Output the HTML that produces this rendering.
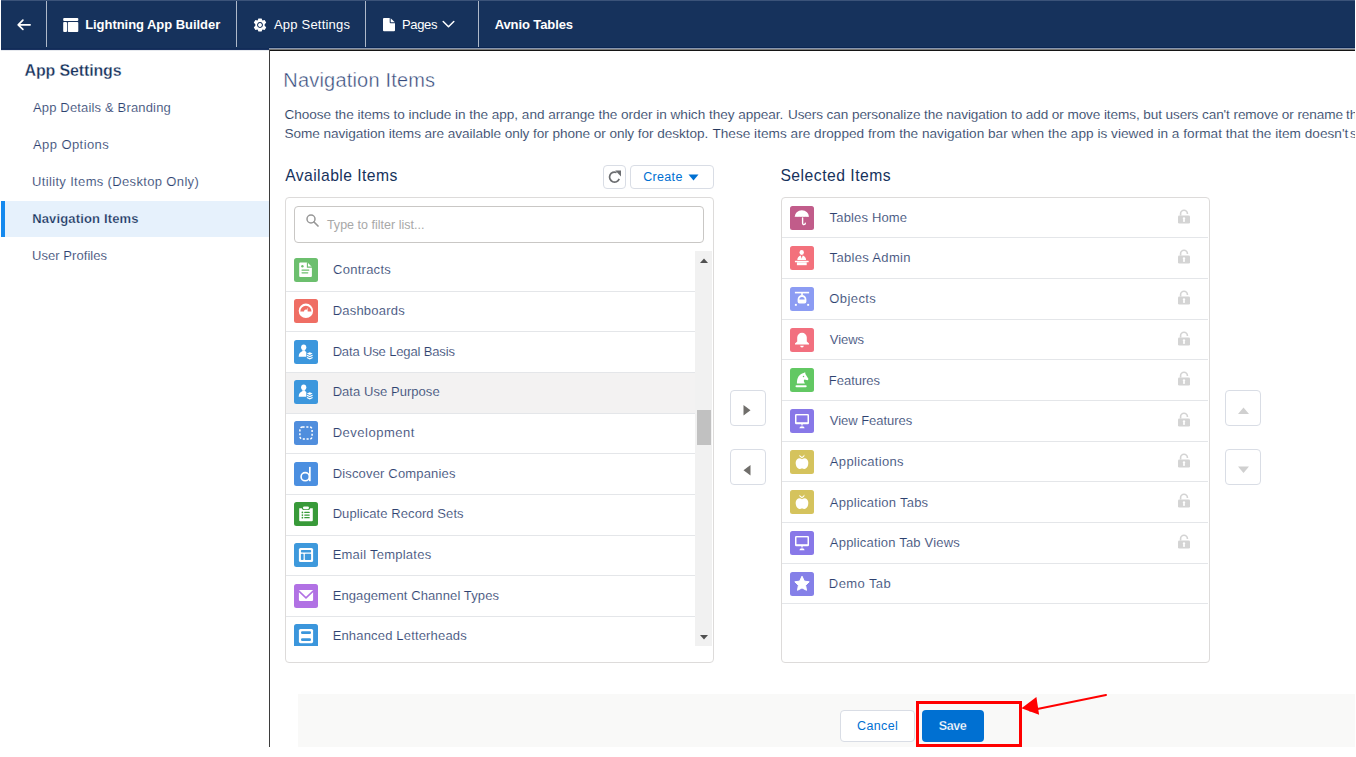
<!DOCTYPE html>
<html><head><meta charset="utf-8"><style>
html,body{margin:0;padding:0;background:#fff;width:1356px;height:757px;overflow:hidden;position:relative;}
.t{position:absolute;white-space:nowrap;font-family:"Liberation Sans", sans-serif;line-height:normal;}
svg{display:block;}
</style></head><body>
<div style="position:absolute;left:1px;top:0px;width:1354px;height:48px;background:#16325c;"></div><div style="position:absolute;left:1px;top:0px;width:1354px;height:1px;background:#3b5379;"></div><div style="position:absolute;left:1px;top:48px;width:268px;height:1px;background:#112c58;"></div><div style="position:absolute;left:1px;top:49px;width:268px;height:1px;background:#1a3260;"></div><div style="position:absolute;left:1px;top:50px;width:268px;height:1px;background:#e6e9ee;"></div><div style="position:absolute;left:269px;top:47px;width:1086px;height:1px;background:#0a2654;"></div><div style="position:absolute;left:269px;top:48px;width:1086px;height:1px;background:#8996ad;"></div><div style="position:absolute;left:46px;top:1px;width:1px;height:46px;background:#c9d1dd;opacity:.85;"></div><div style="position:absolute;left:236px;top:1px;width:1px;height:46px;background:#c9d1dd;opacity:.85;"></div><div style="position:absolute;left:365px;top:1px;width:1px;height:46px;background:#c9d1dd;opacity:.85;"></div><div style="position:absolute;left:478px;top:1px;width:1px;height:46px;background:#c9d1dd;opacity:.85;"></div><svg style="position:absolute;left:16px;top:18px" width="16" height="14" viewBox="0 0 16 14"><path d="M14.1 6.8H2.4M6.9 2.2L2.2 6.8l4.7 4.6" fill="none" stroke="#fff" stroke-width="1.7" stroke-linecap="round" stroke-linejoin="round"/></svg><svg style="position:absolute;left:63px;top:18px" width="16" height="14" viewBox="0 0 16 14"><rect x="0.2" y="0" width="15.1" height="3" rx="1" fill="#fff"/><rect x="0.2" y="3.9" width="3.8" height="10" rx=".9" fill="#fff"/><rect x="4.8" y="3.9" width="10.5" height="10" rx=".9" fill="#fff"/></svg><div class="t" style="left:85.13px;top:17px;font-size:13px;color:#fff;font-weight:700;letter-spacing:-0.044px;">Lightning App Builder</div><svg style="position:absolute;left:253px;top:18px" width="14" height="14" viewBox="-7 -7 14 14"><path fill="#fff" fill-rule="evenodd" d="M-1.6,-6.6 L1.6,-6.6 L2.4,-4.6 L4.6,-5.1 L6.2,-2.4 L4.6,-0.6 L4.6,0.6 L6.2,2.4 L4.6,5.1 L2.4,4.6 L1.6,6.6 L-1.6,6.6 L-2.4,4.6 L-4.6,5.1 L-6.2,2.4 L-4.6,0.6 L-4.6,-0.6 L-6.2,-2.4 L-4.6,-5.1 L-2.4,-4.6 Z M0,-2.9 A2.9,2.9 0 1 0 0.001,-2.9 Z M0,-1.9 A1.9,1.9 0 1 1 -0.001,-1.9 Z"/></svg><div class="t" style="left:273.97px;top:17px;font-size:13px;color:#fff;font-weight:400;letter-spacing:0.206px;">App Settings</div><svg style="position:absolute;left:383px;top:18px" width="12" height="14" viewBox="0 0 12 14"><path d="M1 0H6.7V4.3a1 1 0 0 0 1 1H12V12.3a1 1 0 0 1-1 1H1a1 1 0 0 1-1-1V1a1 1 0 0 1 1-1z" fill="#fff"/><path d="M7.7 0.2L11.8 4.3H7.7z" fill="#fff"/></svg><div class="t" style="left:401.93px;top:17px;font-size:13px;color:#fff;font-weight:400;letter-spacing:-0.335px;">Pages</div><svg style="position:absolute;left:442px;top:20px" width="13" height="9" viewBox="0 0 13 9"><path d="M1.2 1.5l5.3 5.3 5.3-5.3" fill="none" stroke="#fff" stroke-width="1.5" stroke-linecap="round" stroke-linejoin="round"/></svg><div class="t" style="left:494.68px;top:17px;font-size:13px;color:#fff;font-weight:700;letter-spacing:-0.100px;">Avnio Tables</div><div class="t" style="left:24.60px;top:62px;font-size:16px;color:#16325c;font-weight:700;letter-spacing:-0.153px;-webkit-text-stroke:0.3px #fff;">App Settings</div><div style="position:absolute;left:1px;top:201px;width:268px;height:36px;background:#e6f1fc;"></div><div style="position:absolute;left:1px;top:201px;width:4px;height:36px;background:#1589ee;"></div><div class="t" style="left:32.97px;top:100px;font-size:13px;color:#2e4270;font-weight:400;letter-spacing:0.162px;-webkit-text-stroke:0.15px #fff;">App Details &amp; Branding</div><div class="t" style="left:32.97px;top:137px;font-size:13px;color:#2e4270;font-weight:400;letter-spacing:0.423px;-webkit-text-stroke:0.15px #fff;">App Options</div><div class="t" style="left:32.00px;top:174px;font-size:13px;color:#2e4270;font-weight:400;letter-spacing:0.345px;-webkit-text-stroke:0.15px #fff;">Utility Items (Desktop Only)</div><div class="t" style="left:32.13px;top:211px;font-size:13px;color:#16325c;font-weight:700;letter-spacing:0.158px;-webkit-text-stroke:0.25px #e6f1fc;">Navigation Items</div><div class="t" style="left:32.00px;top:248px;font-size:13px;color:#2e4270;font-weight:400;letter-spacing:0.054px;-webkit-text-stroke:0.15px #fff;">User Profiles</div><div style="position:absolute;left:269px;top:49px;width:1087px;height:1px;background:#777674;"></div><div style="position:absolute;left:269px;top:50px;width:1087px;height:1px;background:#141414;"></div><div style="position:absolute;left:269px;top:50px;width:1px;height:697px;background:#3d3d3d;"></div><div class="t" style="left:283.36px;top:69px;font-size:20px;color:#34497a;font-weight:400;letter-spacing:0.186px;-webkit-text-stroke:0.4px #fff;">Navigation Items</div><div class="t" style="left:284.51px;top:107px;font-size:13.6px;color:#26395e;font-weight:400;letter-spacing:-0.036px;-webkit-text-stroke:0.15px #fff;">Choose the items to include in the app, and arrange the order in which they appear.</div><div class="t" style="left:787.95px;top:107px;font-size:13.6px;color:#26395e;font-weight:400;letter-spacing:-0.099px;-webkit-text-stroke:0.15px #fff;">Users can personalize the navigation to add or move items, but users can&#39;t remove or rename</div><div class="t" style="left:1346.09px;top:107px;font-size:13.6px;color:#26395e;font-weight:400;-webkit-text-stroke:0.15px #fff;">them.</div><div class="t" style="left:284.58px;top:126px;font-size:13.6px;color:#26395e;font-weight:400;letter-spacing:-0.058px;-webkit-text-stroke:0.15px #fff;">Some navigation items are available only for phone or only for desktop.</div><div class="t" style="left:712.39px;top:126px;font-size:13.6px;color:#26395e;font-weight:400;letter-spacing:0.031px;-webkit-text-stroke:0.15px #fff;">These items are dropped from the navigation bar when the app is viewed in a format that the item doesn&#39;t</div><div class="t" style="left:1350.02px;top:126px;font-size:13.6px;color:#26395e;font-weight:400;-webkit-text-stroke:0.15px #fff;">support.</div><div class="t" style="left:285.17px;top:167px;font-size:15.7px;color:#16325c;font-weight:400;letter-spacing:0.431px;">Available Items</div><div class="t" style="left:780.39px;top:167px;font-size:15.7px;color:#16325c;font-weight:400;letter-spacing:0.504px;">Selected Items</div><div style="position:absolute;left:603px;top:165px;width:23px;height:24px;border:1px solid #d9dde5;border-radius:4px;box-sizing:border-box;background:#fff;"></div><svg style="position:absolute;left:607px;top:170px" width="15" height="14" viewBox="0 0 15 14"><path d="M12.2 8.9A5 5 0 1 1 9.6 2.5" fill="none" stroke="#6b6d70" stroke-width="1.7"/><path d="M8.2 0.6L14 0.6L14 6.4Z" fill="#6b6d70"/></svg><div style="position:absolute;left:630px;top:165px;width:84px;height:24px;border:1px solid #d9dde5;border-radius:4px;box-sizing:border-box;background:#fff;"></div><div class="t" style="left:643.27px;top:170px;font-size:12.5px;color:#0070d2;font-weight:400;letter-spacing:0.315px;">Create</div><svg style="position:absolute;left:688px;top:174px" width="11" height="7" viewBox="0 0 11 7"><path d="M0.5 0.5H10.5L5.5 6.5Z" fill="#0070d2"/></svg><div style="position:absolute;left:285px;top:197px;width:429px;height:466px;border:1px solid #dddbda;border-radius:4px;box-sizing:border-box;background:#fff;"></div><div style="position:absolute;left:294px;top:206px;width:410px;height:37px;border:1px solid #c9c7c5;border-radius:4px;box-sizing:border-box;background:#fff;"></div><svg style="position:absolute;left:306px;top:214px" width="13" height="13" viewBox="0 0 13 13"><circle cx="5" cy="5" r="4" fill="none" stroke="#979797" stroke-width="1.5"/><path d="M8 8l4 4" stroke="#979797" stroke-width="1.7" stroke-linecap="round"/></svg><div class="t" style="left:326.92px;top:218px;font-size:12.5px;color:#a8a8a8;font-weight:400;letter-spacing:0.018px;">Type to filter list...</div><div style="position:absolute;left:286px;top:251px;width:427px;height:395px;overflow:hidden;"><div style="position:absolute;left:0;top:39.60px;width:409px;height:1px;background:#e4e6e9;"></div><svg style="position:absolute;left:8px;top:7.30px" width="24" height="24" viewBox="0 0 24 24"><rect width="24" height="24" rx="2.5" fill="#6cbf6e"/><path d="M6.2 4.6h7.4l4.3 4.3V18a1 1 0 0 1-1 1H6.2a1 1 0 0 1-1-1V5.6a1 1 0 0 1 1-1z" fill="#fff"/><path d="M13.4 4.2V9.1H18.3" fill="none" stroke="#6cbf6e" stroke-width="1.1"/><circle cx="8.4" cy="8.3" r="1.2" fill="#6cbf6e"/><rect x="7.4" y="11.4" width="8" height="1.3" rx=".65" fill="#6cbf6e"/><rect x="7.4" y="14.2" width="7" height="1.3" rx=".65" fill="#6cbf6e"/></svg><div class="t" style="left:47.04px;top:11.300000000000011px;font-size:13px;color:#2e4270;font-weight:400;letter-spacing:0.261px;-webkit-text-stroke:0.15px #fff;">Contracts</div><div style="position:absolute;left:0;top:80.28px;width:409px;height:1px;background:#e4e6e9;"></div><svg style="position:absolute;left:8px;top:47.98px" width="24" height="24" viewBox="0 0 24 24"><rect width="24" height="24" rx="2.5" fill="#ef6e64"/><circle cx="11.9" cy="11.8" r="7.2" fill="#fff"/><path d="M6.3 12.4A5.6 5.6 0 0 1 17.5 12.4H13.8A1.9 1.9 0 0 0 10 12.4Z" fill="#ef6e64"/><path d="M11.2 12.9L14.2 8.3L12.7 13.6Z" fill="#fff"/></svg><div class="t" style="left:46.63px;top:51.97500000000002px;font-size:13px;color:#2e4270;font-weight:400;letter-spacing:0.223px;-webkit-text-stroke:0.15px #fff;">Dashboards</div><div style="position:absolute;left:0;top:120.95px;width:409px;height:1px;background:#e4e6e9;"></div><svg style="position:absolute;left:8px;top:88.65px" width="24" height="24" viewBox="0 0 24 24"><rect width="24" height="24" rx="2.5" fill="#3c97dd"/><ellipse cx="9.7" cy="7.3" rx="2.6" ry="2.9" fill="#fff"/><path d="M4.7 16.7C4.7 13.4 6.4 11.8 8.3 11.2V10.3H11.1V11.2C11.6 11.4 12 11.6 12.3 11.9V16.7Z" fill="#fff"/><path d="M15.75 12.2l2.9 1.35-2.9 1.35-2.9-1.35z" fill="#fff"/><path d="M12.9 15.3l2.85 1.3 2.85-1.3" stroke="#fff" stroke-width="1.1" fill="none"/><path d="M12.9 17.5l2.85 1.3 2.85-1.3" stroke="#fff" stroke-width="1.1" fill="none"/></svg><div class="t" style="left:46.63px;top:92.64999999999998px;font-size:13px;color:#2e4270;font-weight:400;letter-spacing:-0.143px;-webkit-text-stroke:0.15px #fff;">Data Use Legal Basis</div><div style="position:absolute;left:0;top:122.35px;width:409px;height:39.67px;background:#f3f2f2;"></div><div style="position:absolute;left:0;top:161.62px;width:409px;height:1px;background:#e4e6e9;"></div><svg style="position:absolute;left:8px;top:129.32px" width="24" height="24" viewBox="0 0 24 24"><rect width="24" height="24" rx="2.5" fill="#3c97dd"/><ellipse cx="9.7" cy="7.3" rx="2.6" ry="2.9" fill="#fff"/><path d="M4.7 16.7C4.7 13.4 6.4 11.8 8.3 11.2V10.3H11.1V11.2C11.6 11.4 12 11.6 12.3 11.9V16.7Z" fill="#fff"/><path d="M15.75 12.2l2.9 1.35-2.9 1.35-2.9-1.35z" fill="#fff"/><path d="M12.9 15.3l2.85 1.3 2.85-1.3" stroke="#fff" stroke-width="1.1" fill="none"/><path d="M12.9 17.5l2.85 1.3 2.85-1.3" stroke="#fff" stroke-width="1.1" fill="none"/></svg><div class="t" style="left:46.63px;top:133.325px;font-size:13px;color:#2e4270;font-weight:400;letter-spacing:0.053px;-webkit-text-stroke:0.15px #f3f2f2;">Data Use Purpose</div><div style="position:absolute;left:0;top:202.30px;width:409px;height:1px;background:#e4e6e9;"></div><svg style="position:absolute;left:8px;top:170.00px" width="24" height="24" viewBox="0 0 24 24"><rect width="24" height="24" rx="2.5" fill="#508edd"/><rect x="5.9" y="5.9" width="12.2" height="12.2" rx="2.6" fill="none" stroke="#fff" stroke-width="1.5" stroke-dasharray="2.1 1.7"/></svg><div class="t" style="left:46.63px;top:174.0px;font-size:13px;color:#2e4270;font-weight:400;letter-spacing:0.514px;-webkit-text-stroke:0.15px #fff;">Development</div><div style="position:absolute;left:0;top:242.98px;width:409px;height:1px;background:#e4e6e9;"></div><svg style="position:absolute;left:8px;top:210.68px" width="24" height="24" viewBox="0 0 24 24"><rect width="24" height="24" rx="2.5" fill="#4b8fe0"/><ellipse cx="11.2" cy="14.7" rx="4.1" ry="4.1" fill="none" stroke="#fff" stroke-width="1.6"/><rect x="15" y="4.9" width="1.7" height="14.3" fill="#fff"/></svg><div class="t" style="left:46.63px;top:214.675px;font-size:13px;color:#2e4270;font-weight:400;letter-spacing:0.169px;-webkit-text-stroke:0.15px #fff;">Discover Companies</div><div style="position:absolute;left:0;top:283.65px;width:409px;height:1px;background:#e4e6e9;"></div><svg style="position:absolute;left:8px;top:251.35px" width="24" height="24" viewBox="0 0 24 24"><rect width="24" height="24" rx="2.5" fill="#389a39"/><path d="M5.2 6.3h2.6a1.9 1.9 0 0 0 1.9 1.6h4.6a1.9 1.9 0 0 0 1.9-1.6h2.6V18.2a1 1 0 0 1-1 1H6.2a1 1 0 0 1-1-1z" fill="#fff"/><rect x="8.9" y="4.4" width="6.1" height="2.8" rx="1.4" fill="#fff"/><circle cx="8.4" cy="10.4" r=".85" fill="#389a39"/><circle cx="8.4" cy="13.1" r=".85" fill="#389a39"/><circle cx="8.4" cy="15.7" r=".85" fill="#389a39"/><rect x="10.2" y="9.8" width="5.6" height="1.2" rx=".6" fill="#389a39"/><rect x="10.2" y="12.5" width="5.6" height="1.2" rx=".6" fill="#389a39"/><rect x="10.2" y="15.1" width="5.6" height="1.2" rx=".6" fill="#389a39"/></svg><div class="t" style="left:46.63px;top:255.35000000000002px;font-size:13px;color:#2e4270;font-weight:400;letter-spacing:0.083px;-webkit-text-stroke:0.15px #fff;">Duplicate Record Sets</div><div style="position:absolute;left:0;top:324.33px;width:409px;height:1px;background:#e4e6e9;"></div><svg style="position:absolute;left:8px;top:292.02px" width="24" height="24" viewBox="0 0 24 24"><rect width="24" height="24" rx="2.5" fill="#3e99dc"/><rect x="4.9" y="4.9" width="14.2" height="14.2" rx="1.6" fill="#fff"/><rect x="6.9" y="6.9" width="10.2" height="2.6" rx=".8" fill="#3e99dc"/><rect x="6.9" y="10.8" width="2.7" height="6.3" rx=".8" fill="#3e99dc"/><rect x="10.8" y="10.8" width="6.3" height="6.3" rx=".8" fill="#3e99dc"/></svg><div class="t" style="left:46.63px;top:296.025px;font-size:13px;color:#2e4270;font-weight:400;letter-spacing:0.241px;-webkit-text-stroke:0.15px #fff;">Email Templates</div><div style="position:absolute;left:0;top:365.00px;width:409px;height:1px;background:#e4e6e9;"></div><svg style="position:absolute;left:8px;top:332.70px" width="24" height="24" viewBox="0 0 24 24"><rect width="24" height="24" rx="2.5" fill="#b171e4"/><path d="M4.9 5.9h14.2L12 12.8z" fill="#fff"/><path d="M4.9 8.2L12 14.9l7.1-6.7V15.8a1.2 1.2 0 0 1-1.2 1.2H6.1a1.2 1.2 0 0 1-1.2-1.2z" fill="#fff"/></svg><div class="t" style="left:46.63px;top:336.70000000000005px;font-size:13px;color:#2e4270;font-weight:400;letter-spacing:0.111px;-webkit-text-stroke:0.15px #fff;">Engagement Channel Types</div><svg style="position:absolute;left:8px;top:373.38px" width="24" height="24" viewBox="0 0 24 24"><rect width="24" height="24" rx="2.5" fill="#3b96dc"/><rect x="4.9" y="5" width="14.2" height="14.2" rx="1.6" fill="#fff"/><rect x="7" y="7.3" width="10" height="2.7" rx="1.3" fill="#3b96dc"/><rect x="7" y="14.3" width="10" height="2.7" rx="1.3" fill="#3b96dc"/></svg><div class="t" style="left:46.63px;top:377.375px;font-size:13px;color:#2e4270;font-weight:400;letter-spacing:0.172px;-webkit-text-stroke:0.15px #fff;">Enhanced Letterheads</div><div style="position:absolute;left:409px;top:0;width:17px;height:395px;background:#f1f1f1;"></div><div style="position:absolute;left:411px;top:159px;width:14px;height:35px;background:#c1c1c1;"></div><svg style="position:absolute;left:414px;top:7px" width="8" height="5" viewBox="0 0 8 5"><path d="M0 5L4 0.5L8 5Z" fill="#505050"/></svg><svg style="position:absolute;left:414px;top:384px" width="8" height="5" viewBox="0 0 8 5"><path d="M0 0L8 0L4 4.5Z" fill="#505050"/></svg></div><div style="position:absolute;left:730px;top:390px;width:36px;height:36px;border:1px solid #d9dde5;border-radius:4px;box-sizing:border-box;background:#fff;"></div><svg style="position:absolute;left:741px;top:405.4px" width="12" height="11" viewBox="0 0 12 11"><path d="M2.5 0L9.5 5.2L2.5 10.4Z" fill="#706e6b"/></svg><div style="position:absolute;left:730px;top:449px;width:36px;height:36px;border:1px solid #d9dde5;border-radius:4px;box-sizing:border-box;background:#fff;"></div><svg style="position:absolute;left:741px;top:464.8px" width="12" height="11" viewBox="0 0 12 11"><path d="M9.5 0L2.5 5.2L9.5 10.4Z" fill="#706e6b"/></svg><div style="position:absolute;left:781px;top:197px;width:429px;height:466px;border:1px solid #dddbda;border-radius:4px;box-sizing:border-box;background:#fff;"></div><div style="position:absolute;left:782px;top:237.20px;width:426px;height:1px;background:#e4e6e9;"></div><svg style="position:absolute;left:790px;top:205.60px" width="24" height="24" viewBox="0 0 24 24"><rect width="24" height="24" rx="2.5" fill="#c15c8a"/><path d="M4.6 11A7.2 6.7 0 0 1 19.1 11c-.45-.45-.95-.45-1.45 0-.45-.45-.95-.45-1.45 0-.45-.45-.95-.45-1.45 0-.45-.45-.95-.45-1.45 0-.45-.45-.95-.45-1.45 0-.45-.45-.95-.45-1.45 0-.45-.45-.95-.45-1.45 0-.45-.45-.95-.45-1.45 0-.45-.45-.95-.45-1.45 0-.45-.45-.95-.45-1.45 0z" fill="#fff"/><path d="M12.6 12v5.3a1.35 1.35 0 0 0 2.7 0" fill="none" stroke="#fff" stroke-width="1.4" stroke-linecap="round"/></svg><div class="t" style="left:829.61px;top:209.8px;font-size:13px;color:#2e4270;font-weight:400;letter-spacing:0.158px;-webkit-text-stroke:0.15px #fff;">Tables Home</div><svg style="position:absolute;left:1177px;top:208.50px" width="14" height="15" viewBox="0 0 14 15"><path d="M3.6 6.5V4.6a3.4 3.4 0 0 1 6.8 0v.5" fill="none" stroke="#d4d4d4" stroke-width="1.6"/><rect x="1" y="6.5" width="12" height="8" rx="1.2" fill="#d4d4d4"/><path d="M7 8.3a1.2 1.2 0 0 1 .7 2.2l.4 2.2H5.9l.4-2.2A1.2 1.2 0 0 1 7 8.3z" fill="#fff"/></svg><div style="position:absolute;left:782px;top:277.88px;width:426px;height:1px;background:#e4e6e9;"></div><svg style="position:absolute;left:790px;top:246.27px" width="24" height="24" viewBox="0 0 24 24"><rect width="24" height="24" rx="2.5" fill="#f3717c"/><ellipse cx="11.7" cy="6.5" rx="2.2" ry="2.4" fill="#fff"/><path d="M7.3 14C7.3 11.3 9 9.9 10.8 9.5L11.7 12.7L12.6 9.5C14.4 9.9 16.1 11.3 16.1 14Z" fill="#fff"/><rect x="4.9" y="14.8" width="13.8" height="1.5" rx=".5" fill="#fff"/><rect x="6.9" y="16.3" width="9.8" height="2.9" fill="#fff"/></svg><div class="t" style="left:829.61px;top:250.47500000000002px;font-size:13px;color:#2e4270;font-weight:400;letter-spacing:0.327px;-webkit-text-stroke:0.15px #fff;">Tables Admin</div><svg style="position:absolute;left:1177px;top:249.18px" width="14" height="15" viewBox="0 0 14 15"><path d="M3.6 6.5V4.6a3.4 3.4 0 0 1 6.8 0v.5" fill="none" stroke="#d4d4d4" stroke-width="1.6"/><rect x="1" y="6.5" width="12" height="8" rx="1.2" fill="#d4d4d4"/><path d="M7 8.3a1.2 1.2 0 0 1 .7 2.2l.4 2.2H5.9l.4-2.2A1.2 1.2 0 0 1 7 8.3z" fill="#fff"/></svg><div style="position:absolute;left:782px;top:318.55px;width:426px;height:1px;background:#e4e6e9;"></div><svg style="position:absolute;left:790px;top:286.95px" width="24" height="24" viewBox="0 0 24 24"><rect width="24" height="24" rx="2.5" fill="#8c9cf3"/><rect x="4.9" y="4.8" width="14.2" height="1.6" fill="#fff"/><rect x="11.2" y="6" width="1.6" height="2.2" fill="#fff"/><path d="M12 7.9A4.4 4.6 0 0 1 16.4 12.5V14.6A1.9 1.9 0 0 1 14.5 16.5H9.5A1.9 1.9 0 0 1 7.6 14.6V12.5A4.4 4.6 0 0 1 12 7.9Z" fill="#fff"/><path d="M9.3 12.4A2.7 2.5 0 0 1 14.7 12.4Z" fill="#8c9cf3"/><rect x="4.9" y="16.9" width="1.9" height="1.9" fill="#fff"/><rect x="17.2" y="16.9" width="1.9" height="1.9" fill="#fff"/></svg><div class="t" style="left:829.28px;top:291.15px;font-size:13px;color:#2e4270;font-weight:400;letter-spacing:0.418px;-webkit-text-stroke:0.15px #fff;">Objects</div><svg style="position:absolute;left:1177px;top:289.85px" width="14" height="15" viewBox="0 0 14 15"><path d="M3.6 6.5V4.6a3.4 3.4 0 0 1 6.8 0v.5" fill="none" stroke="#d4d4d4" stroke-width="1.6"/><rect x="1" y="6.5" width="12" height="8" rx="1.2" fill="#d4d4d4"/><path d="M7 8.3a1.2 1.2 0 0 1 .7 2.2l.4 2.2H5.9l.4-2.2A1.2 1.2 0 0 1 7 8.3z" fill="#fff"/></svg><div style="position:absolute;left:782px;top:359.22px;width:426px;height:1px;background:#e4e6e9;"></div><svg style="position:absolute;left:790px;top:327.62px" width="24" height="24" viewBox="0 0 24 24"><rect width="24" height="24" rx="2.5" fill="#f2707f"/><path d="M12 4.8A4.8 4.8 0 0 1 16.8 9.6V13.6L19 15.6V16.6H5V15.6L7.2 13.6V9.6A4.8 4.8 0 0 1 12 4.8Z" fill="#fff"/><path d="M10.2 17.8H13.8A1.8 1.6 0 0 1 10.2 17.8Z" fill="#fff"/></svg><div class="t" style="left:829.84px;top:331.825px;font-size:13px;color:#2e4270;font-weight:400;letter-spacing:-0.082px;-webkit-text-stroke:0.15px #fff;">Views</div><svg style="position:absolute;left:1177px;top:330.52px" width="14" height="15" viewBox="0 0 14 15"><path d="M3.6 6.5V4.6a3.4 3.4 0 0 1 6.8 0v.5" fill="none" stroke="#d4d4d4" stroke-width="1.6"/><rect x="1" y="6.5" width="12" height="8" rx="1.2" fill="#d4d4d4"/><path d="M7 8.3a1.2 1.2 0 0 1 .7 2.2l.4 2.2H5.9l.4-2.2A1.2 1.2 0 0 1 7 8.3z" fill="#fff"/></svg><div style="position:absolute;left:782px;top:399.90px;width:426px;height:1px;background:#e4e6e9;"></div><svg style="position:absolute;left:790px;top:368.30px" width="24" height="24" viewBox="0 0 24 24"><rect width="24" height="24" rx="2.5" fill="#62c863"/><path d="M6.9 15.4C6.9 9.6 9.4 6 13.6 5.1L15.2 4.2L15.4 5.9L18.5 11.1L17.6 12.2L14.5 11.4C13.7 12 13.6 13.2 14.3 14.3L14.9 15.4Z" fill="#fff"/><rect x="5.5" y="17.2" width="11.2" height="2" rx="1" fill="#fff"/><circle cx="13.5" cy="8.4" r=".75" fill="#62c863"/></svg><div class="t" style="left:828.83px;top:372.5px;font-size:13px;color:#2e4270;font-weight:400;letter-spacing:-0.011px;-webkit-text-stroke:0.15px #fff;">Features</div><svg style="position:absolute;left:1177px;top:371.20px" width="14" height="15" viewBox="0 0 14 15"><path d="M3.6 6.5V4.6a3.4 3.4 0 0 1 6.8 0v.5" fill="none" stroke="#d4d4d4" stroke-width="1.6"/><rect x="1" y="6.5" width="12" height="8" rx="1.2" fill="#d4d4d4"/><path d="M7 8.3a1.2 1.2 0 0 1 .7 2.2l.4 2.2H5.9l.4-2.2A1.2 1.2 0 0 1 7 8.3z" fill="#fff"/></svg><div style="position:absolute;left:782px;top:440.57px;width:426px;height:1px;background:#e4e6e9;"></div><svg style="position:absolute;left:790px;top:408.98px" width="24" height="24" viewBox="0 0 24 24"><rect width="24" height="24" rx="2.5" fill="#8878e8"/><rect x="5" y="5" width="14" height="10.2" rx="1.3" fill="#fff"/><rect x="6.5" y="6.4" width="11" height="6.8" fill="#8878e8"/><rect x="11.4" y="14.5" width="1.2" height="2" fill="#fff"/><path d="M9.4 19.2A2.6 1.9 0 0 1 14.6 19.2Z" fill="#fff"/></svg><div class="t" style="left:829.84px;top:413.175px;font-size:13px;color:#2e4270;font-weight:400;letter-spacing:-0.037px;-webkit-text-stroke:0.15px #fff;">View Features</div><svg style="position:absolute;left:1177px;top:411.88px" width="14" height="15" viewBox="0 0 14 15"><path d="M3.6 6.5V4.6a3.4 3.4 0 0 1 6.8 0v.5" fill="none" stroke="#d4d4d4" stroke-width="1.6"/><rect x="1" y="6.5" width="12" height="8" rx="1.2" fill="#d4d4d4"/><path d="M7 8.3a1.2 1.2 0 0 1 .7 2.2l.4 2.2H5.9l.4-2.2A1.2 1.2 0 0 1 7 8.3z" fill="#fff"/></svg><div style="position:absolute;left:782px;top:481.25px;width:426px;height:1px;background:#e4e6e9;"></div><svg style="position:absolute;left:790px;top:449.65px" width="24" height="24" viewBox="0 0 24 24"><rect width="24" height="24" rx="2.5" fill="#d5c35d"/><path d="M12 9.3C13.5 8.2 15.4 8 16.6 8.9C18 9.9 18.6 11.9 18.2 14.3C17.8 17 16.3 19 14.5 19C13.5 19 13 18.5 12 18.5S10.5 19 9.5 19C7.7 19 6.2 17 5.8 14.3C5.4 11.9 6 9.9 7.4 8.9C8.6 8 10.5 8.2 12 9.3Z" fill="#fff"/><path d="M9.3 4.7L12 7.1L14.6 4.6L14.2 6.6L12 8.3L9.6 6.4Z" fill="#fff"/></svg><div class="t" style="left:829.87px;top:453.85px;font-size:13px;color:#2e4270;font-weight:400;letter-spacing:0.325px;-webkit-text-stroke:0.15px #fff;">Applications</div><svg style="position:absolute;left:1177px;top:452.55px" width="14" height="15" viewBox="0 0 14 15"><path d="M3.6 6.5V4.6a3.4 3.4 0 0 1 6.8 0v.5" fill="none" stroke="#d4d4d4" stroke-width="1.6"/><rect x="1" y="6.5" width="12" height="8" rx="1.2" fill="#d4d4d4"/><path d="M7 8.3a1.2 1.2 0 0 1 .7 2.2l.4 2.2H5.9l.4-2.2A1.2 1.2 0 0 1 7 8.3z" fill="#fff"/></svg><div style="position:absolute;left:782px;top:521.92px;width:426px;height:1px;background:#e4e6e9;"></div><svg style="position:absolute;left:790px;top:490.32px" width="24" height="24" viewBox="0 0 24 24"><rect width="24" height="24" rx="2.5" fill="#d5c35d"/><path d="M12 9.3C13.5 8.2 15.4 8 16.6 8.9C18 9.9 18.6 11.9 18.2 14.3C17.8 17 16.3 19 14.5 19C13.5 19 13 18.5 12 18.5S10.5 19 9.5 19C7.7 19 6.2 17 5.8 14.3C5.4 11.9 6 9.9 7.4 8.9C8.6 8 10.5 8.2 12 9.3Z" fill="#fff"/><path d="M9.3 4.7L12 7.1L14.6 4.6L14.2 6.6L12 8.3L9.6 6.4Z" fill="#fff"/></svg><div class="t" style="left:829.87px;top:494.525px;font-size:13px;color:#2e4270;font-weight:400;letter-spacing:0.255px;-webkit-text-stroke:0.15px #fff;">Application Tabs</div><svg style="position:absolute;left:1177px;top:493.22px" width="14" height="15" viewBox="0 0 14 15"><path d="M3.6 6.5V4.6a3.4 3.4 0 0 1 6.8 0v.5" fill="none" stroke="#d4d4d4" stroke-width="1.6"/><rect x="1" y="6.5" width="12" height="8" rx="1.2" fill="#d4d4d4"/><path d="M7 8.3a1.2 1.2 0 0 1 .7 2.2l.4 2.2H5.9l.4-2.2A1.2 1.2 0 0 1 7 8.3z" fill="#fff"/></svg><div style="position:absolute;left:782px;top:562.60px;width:426px;height:1px;background:#e4e6e9;"></div><svg style="position:absolute;left:790px;top:531.00px" width="24" height="24" viewBox="0 0 24 24"><rect width="24" height="24" rx="2.5" fill="#8878e8"/><rect x="5" y="5" width="14" height="10.2" rx="1.3" fill="#fff"/><rect x="6.5" y="6.4" width="11" height="6.8" fill="#8878e8"/><rect x="11.4" y="14.5" width="1.2" height="2" fill="#fff"/><path d="M9.4 19.2A2.6 1.9 0 0 1 14.6 19.2Z" fill="#fff"/></svg><div class="t" style="left:829.87px;top:535.2px;font-size:13px;color:#2e4270;font-weight:400;letter-spacing:0.198px;-webkit-text-stroke:0.15px #fff;">Application Tab Views</div><svg style="position:absolute;left:1177px;top:533.90px" width="14" height="15" viewBox="0 0 14 15"><path d="M3.6 6.5V4.6a3.4 3.4 0 0 1 6.8 0v.5" fill="none" stroke="#d4d4d4" stroke-width="1.6"/><rect x="1" y="6.5" width="12" height="8" rx="1.2" fill="#d4d4d4"/><path d="M7 8.3a1.2 1.2 0 0 1 .7 2.2l.4 2.2H5.9l.4-2.2A1.2 1.2 0 0 1 7 8.3z" fill="#fff"/></svg><div style="position:absolute;left:782px;top:603.27px;width:426px;height:1px;background:#e4e6e9;"></div><svg style="position:absolute;left:790px;top:571.67px" width="24" height="24" viewBox="0 0 24 24"><rect width="24" height="24" rx="2.5" fill="#8580e8"/><path d="M12 4.2L14.3 9.1L19.2 9.8L15.6 13.3L16.5 18.3L12 15.9L7.5 18.3L8.4 13.3L4.8 9.8L9.7 9.1Z" fill="#fff" stroke="#fff" stroke-width="1" stroke-linejoin="round"/></svg><div class="t" style="left:828.83px;top:575.875px;font-size:13px;color:#2e4270;font-weight:400;letter-spacing:0.412px;-webkit-text-stroke:0.15px #fff;">Demo Tab</div><div style="position:absolute;left:1225px;top:390px;width:36px;height:36px;border:1px solid #d9dde5;border-radius:4px;box-sizing:border-box;background:#fff;"></div><svg style="position:absolute;left:1238px;top:407px" width="11" height="8" viewBox="0 0 11 8"><path d="M0 7L5.5 0.5L11 7Z" fill="#d0d0d0"/></svg><div style="position:absolute;left:1225px;top:449px;width:36px;height:36px;border:1px solid #d9dde5;border-radius:4px;box-sizing:border-box;background:#fff;"></div><svg style="position:absolute;left:1238px;top:466px" width="11" height="8" viewBox="0 0 11 8"><path d="M0 0.5L11 0.5L5.5 7Z" fill="#d0d0d0"/></svg><div style="position:absolute;left:298px;top:694px;width:1058px;height:53px;background:#f9f9f8;"></div><div style="position:absolute;left:840px;top:710px;width:75px;height:32px;border:1px solid #d9dde5;border-radius:4px;box-sizing:border-box;background:#fff;"></div><div class="t" style="left:856.97px;top:719px;font-size:12.5px;color:#0070d2;font-weight:400;letter-spacing:0.390px;">Cancel</div><div style="position:absolute;left:922px;top:710px;width:62px;height:32px;border-radius:4px;background:#0070d2;"></div><div class="t" style="left:938.84px;top:719px;font-size:12.5px;color:#fff;font-weight:700;letter-spacing:-0.439px;-webkit-text-stroke:0.25px #0070d2;">Save</div><div style="position:absolute;left:916px;top:701px;width:106px;height:46px;border:3px solid #ff0000;box-sizing:border-box;"></div><svg style="position:absolute;left:1015px;top:688px" width="100" height="32" viewBox="1015 688 100 32"><path d="M1106 695L1030 710.5" stroke="#ff0000" stroke-width="2" stroke-linecap="round"/><path d="M1021.5 708.2L1036.4 697.1L1039.1 714.8Z" fill="#ff0000"/></svg><div style="position:absolute;left:1355px;top:0px;width:1px;height:757px;background:#fff;"></div>
</body></html>
